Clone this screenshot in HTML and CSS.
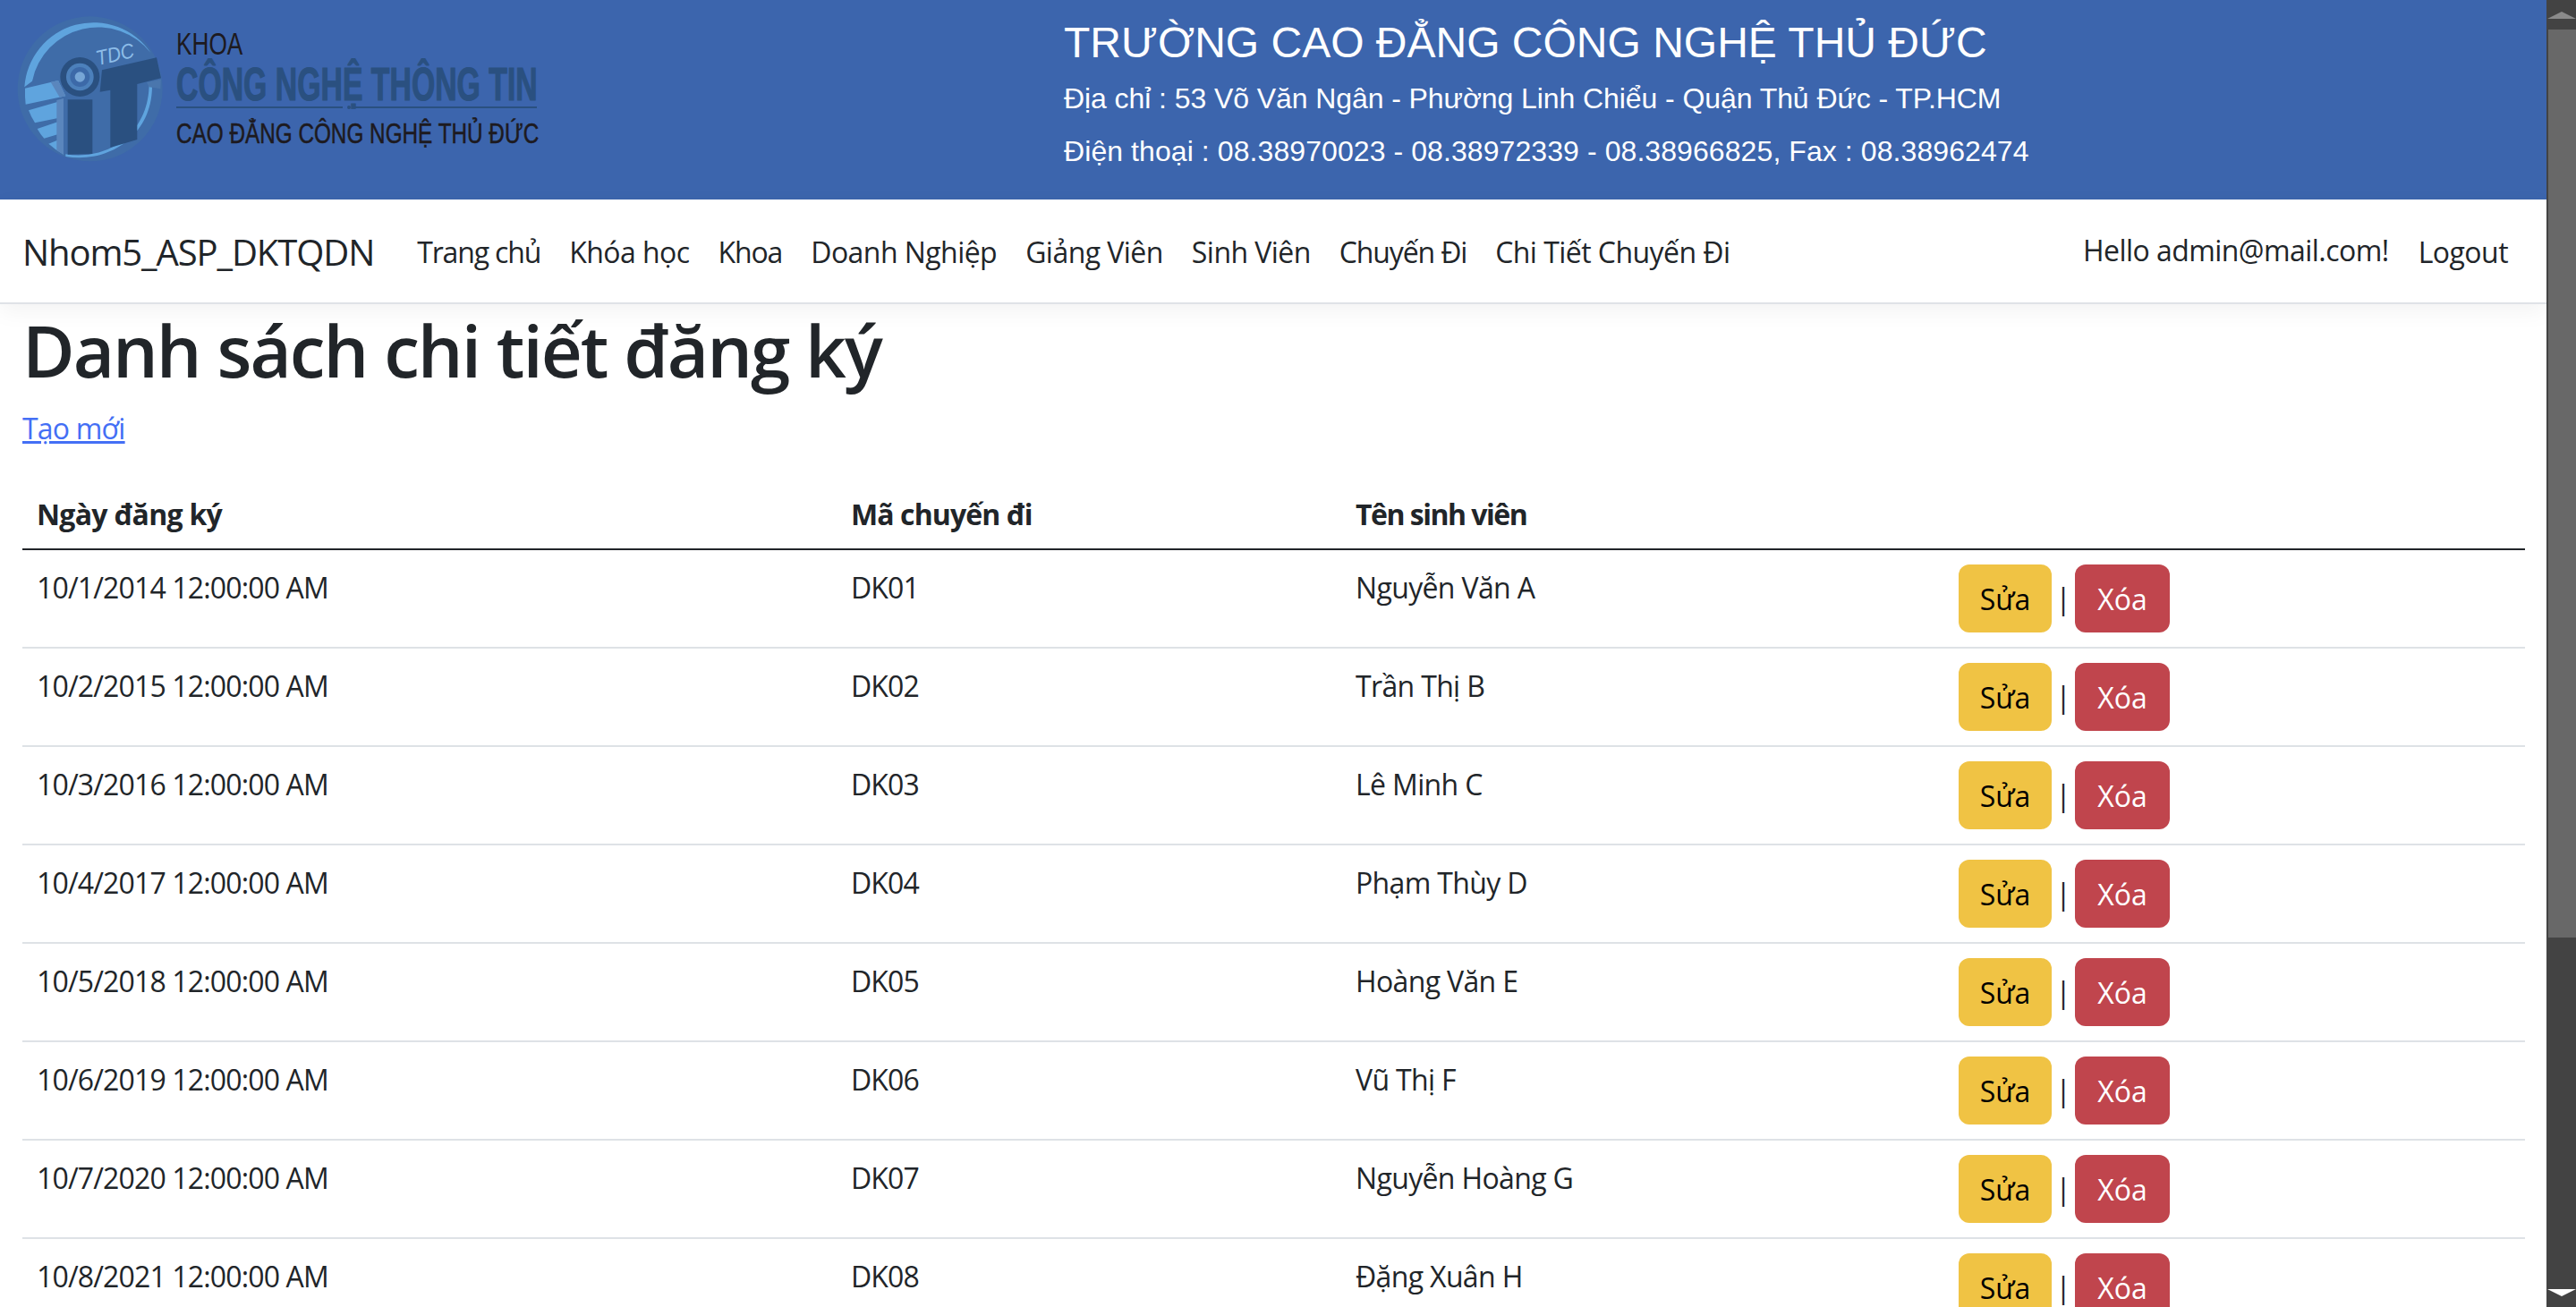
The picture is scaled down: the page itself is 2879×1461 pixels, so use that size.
FILE: index.html
```html
<!DOCTYPE html>
<html lang="vi">
<head>
<meta charset="utf-8">
<title>Danh sách chi tiết đăng ký</title>
<link rel="stylesheet" href="styles.css">
</head>
<body>
<div class="app">
  <div class="page">
    <header class="banner">
      <svg class="logo" viewBox="0 0 640 223" width="640" height="223" role="img" aria-label="Khoa Công nghệ thông tin">
        <g transform="translate(10 10) scale(.3333)">
          <circle cx="272" cy="268" r="243" fill="#3f6ca8"/>
          <path d="M52 262 A232 232 0 0 1 476 148 A225 225 0 0 0 78 242 Z" fill="#5fa4de"/>
          <path d="M190 487 C330 510 470 420 470 250 L480 250 C485 420 340 520 190 495 Z" fill="#5fa4de"/>
          <path d="M54 266 L165 240 L190 292 L56 320 Q53 295 54 266 Z" fill="#5fa4de"/>
          <path d="M66 340 L183 306 L183 362 L87 382 Q74 362 66 340 Z" fill="#5fa4de"/>
          <path d="M95 402 L183 372 L183 415 L118 434 Q105 420 95 402 Z" fill="#5fa4de"/>
          <path d="M133 452 L183 432 L183 488 Q155 472 133 452 Z" fill="#5fa4de"/>
          <path d="M160 306 L183 300 L183 488 L160 474 Z" fill="#5a86bd"/>
          <path d="M140 245 L165 240 L190 292 L170 296 Z" fill="#5a86bd"/>
          <path d="M197 304 H280 V486 L197 488 Z" fill="#2a5080"/>
          <circle cx="238" cy="228" r="66" fill="#2a5080"/>
          <circle cx="238" cy="228" r="46" fill="#4c80bb"/>
          <circle cx="238" cy="228" r="33" fill="#3c69a8"/>
          <circle cx="238" cy="228" r="17" fill="#76a5d6"/>
          <path d="M312 205 L495 163 L510 232 L430 252 L430 438 L340 465 L340 272 L305 278 Z" fill="#2a5080"/>
          <path d="M462 246 L510 236 L508 268 L470 262 Z" fill="#4a76ad"/>
          <text class="logo-tdc" transform="translate(298 190) rotate(-13) scale(.9 1)">TDC</text>
        </g>
        <text class="logo-khoa" transform="translate(197 61) scale(.75 1)">KHOA</text>
        <text class="logo-cntt" transform="translate(197 112) scale(.663 1)">CÔNG NGHỆ THÔNG TIN</text>
        <path class="logo-rule" d="M197 120 H383 M396 120 H600"/>
        <circle class="logo-dot" cx="390" cy="120" r="2"/>
        <text class="logo-cao" transform="translate(197 160) scale(.76 1)">CAO ĐẲNG CÔNG NGHỆ THỦ ĐỨC</text>
      </svg>
      <div class="school">
        <div class="school-name">TRƯỜNG CAO ĐẲNG CÔNG NGHỆ THỦ ĐỨC</div>
        <div class="school-addr">Địa chỉ : 53 Võ Văn Ngân - Phường Linh Chiểu - Quận Thủ Đức - TP.HCM</div>
        <div class="school-phone">Điện thoại : 08.38970023 - 08.38972339 - 08.38966825, Fax : 08.38962474</div>
      </div>
    </header>
    <nav class="navbar">
      <a class="brand" href="#">Nhom5_ASP_DKTQDN</a>
      <ul class="nav-links">
        <li class="tight"><a href="#">Trang chủ</a></li>
        <li><a href="#">Khóa học</a></li>
        <li class="tight"><a href="#">Khoa</a></li>
        <li><a href="#">Doanh Nghiệp</a></li>
        <li><a href="#">Giảng Viên</a></li>
        <li><a href="#">Sinh Viên</a></li>
        <li class="tight"><a href="#">Chuyến Đi</a></li>
        <li><a href="#">Chi Tiết Chuyến Đi</a></li>
      </ul>
      <div class="user">
        <span class="hello">Hello admin@mail.com!</span>
        <a class="logout" href="#">Logout</a>
      </div>
    </nav>
    <main class="content">
      <h1>Danh sách chi tiết đăng ký</h1>
      <p class="create"><a href="#">Tạo mới</a></p>
      <table>
        <thead>
          <tr><th class="c1">Ngày đăng ký</th><th class="c2">Mã chuyến đi</th><th class="c3">Tên sinh viên</th><th></th></tr>
        </thead>
        <tbody>
          <tr><td>10/1/2014 12:00:00 AM</td><td>DK01</td><td>Nguyễn Văn A</td><td><div class="actions"><a class="btn edit" href="#">Sửa</a><span class="sep">|</span><a class="btn del" href="#">Xóa</a></div></td></tr>
          <tr><td>10/2/2015 12:00:00 AM</td><td>DK02</td><td>Trần Thị B</td><td><div class="actions"><a class="btn edit" href="#">Sửa</a><span class="sep">|</span><a class="btn del" href="#">Xóa</a></div></td></tr>
          <tr><td>10/3/2016 12:00:00 AM</td><td>DK03</td><td>Lê Minh C</td><td><div class="actions"><a class="btn edit" href="#">Sửa</a><span class="sep">|</span><a class="btn del" href="#">Xóa</a></div></td></tr>
          <tr><td>10/4/2017 12:00:00 AM</td><td>DK04</td><td>Phạm Thùy D</td><td><div class="actions"><a class="btn edit" href="#">Sửa</a><span class="sep">|</span><a class="btn del" href="#">Xóa</a></div></td></tr>
          <tr><td>10/5/2018 12:00:00 AM</td><td>DK05</td><td>Hoàng Văn E</td><td><div class="actions"><a class="btn edit" href="#">Sửa</a><span class="sep">|</span><a class="btn del" href="#">Xóa</a></div></td></tr>
          <tr><td>10/6/2019 12:00:00 AM</td><td>DK06</td><td>Vũ Thị F</td><td><div class="actions"><a class="btn edit" href="#">Sửa</a><span class="sep">|</span><a class="btn del" href="#">Xóa</a></div></td></tr>
          <tr><td>10/7/2020 12:00:00 AM</td><td>DK07</td><td>Nguyễn Hoàng G</td><td><div class="actions"><a class="btn edit" href="#">Sửa</a><span class="sep">|</span><a class="btn del" href="#">Xóa</a></div></td></tr>
          <tr><td>10/8/2021 12:00:00 AM</td><td>DK08</td><td>Đặng Xuân H</td><td><div class="actions"><a class="btn edit" href="#">Sửa</a><span class="sep">|</span><a class="btn del" href="#">Xóa</a></div></td></tr>
        </tbody>
      </table>
    </main>
  </div>
  <div class="scrollbar" aria-hidden="true">
    <div class="arrow"><span class="tri-up"></span></div>
    <div class="thumb"></div>
    <div class="track"></div>
    <div class="arrow"><span class="tri-down"></span></div>
  </div>
</div>
</body>
</html>
```
FILE: styles.css
```css
* { box-sizing: border-box; }
html, body { margin: 0; height: 100%; overflow: hidden; }
body { font-family: "Open Sans", "Noto Sans", sans-serif; font-size: 32px; line-height: 48px; color: #212529; background: #fff; }
a { color: inherit; text-decoration: none; }

.app { display: flex; height: 100vh; }
.page { flex: 1; min-width: 0; overflow: hidden; }

.banner { display: grid; grid-template-columns: 1189px 1fr; height: 223px; background: #3c65ad; color: #fff; font-family: "Liberation Sans", Arial, sans-serif; }
.logo { display: block; }
.logo-tdc { font: italic 400 70px "Liberation Sans", Arial, sans-serif; fill: #8dbde8; }
.logo-khoa { font: 400 35px "Liberation Sans", Arial, sans-serif; fill: #1d1a20; }
.logo-cntt { font: 700 51px "Liberation Sans", Arial, sans-serif; fill: #2a5080; stroke: #2a5080; stroke-width: 1.2px; }
.logo-cao { font: 400 32px "Liberation Sans", Arial, sans-serif; fill: #1d1a20; stroke: #1d1a20; stroke-width: .5px; }
.logo-rule { stroke: #2a5080; stroke-width: 2; fill: none; }
.logo-dot { fill: #2a5080; }

.school { padding-top: 16px; }
.school-name { font-size: 48px; line-height: 64px; }
.school-addr { font-size: 32px; line-height: 60px; letter-spacing: -.08px; }
.school-phone { font-size: 32px; line-height: 59px; letter-spacing: .08px; }

.navbar { display: flex; align-items: center; height: 117px; padding: 2px 24px 0 25px; background: #fff; border-bottom: 2px solid #dfe2e7; box-shadow: 0 8px 24px rgba(0,0,0,.05); letter-spacing: -.55px; }
.brand { font-size: 40px; line-height: 60px; margin-right: 32px; letter-spacing: -1.1px; }
.nav-links { display: flex; gap: 32px; list-style: none; margin: 0; padding: 0 0 0 16px; }
.nav-links .tight { letter-spacing: -1.15px; }
.user { margin-left: auto; display: flex; gap: 33px; align-items: center; padding-right: 19px; }
.hello { position: relative; top: -2px; }

.content { padding: 0 24px 0 25px; }
h1 { margin: 0 0 16px; padding-top: 3px; height: 96px; font-size: 80px; line-height: 96px; font-weight: 600; letter-spacing: -2px; }
.create { margin: 0 0 33px; padding-top: 3px; height: 48px; letter-spacing: -.8px; }
.create a { color: #446ff5; text-decoration: underline; }

table { width: 2797px; border-collapse: collapse; table-layout: fixed; }
th, td { padding: 18px 16px 14px; text-align: left; vertical-align: top; }
th { font-weight: 700; border-bottom: 2px solid #212529; letter-spacing: -.9px; }
th.c1 { letter-spacing: -.7px; }
th.c3 { letter-spacing: -1.5px; }
td { border-bottom: 2px solid #dee2e6; letter-spacing: -.65px; }
td:first-child { letter-spacing: -.85px; }
td:nth-child(2) { letter-spacing: -.9px; }
td:last-child { padding: 16px; letter-spacing: 0; }
.c1 { width: 910px; }
.c2 { width: 564px; }
.c3 { width: 674px; }

.actions { display: flex; align-items: center; }
.btn { display: block; height: 76px; padding: 15px 0 13px; text-align: center; border-radius: 12px; }
.edit { width: 104px; background: #f0c344; color: #000; }
.del { width: 106px; background: #c0454d; color: #fff; }
.sep { width: 26px; text-align: center; }

.scrollbar { flex: 0 0 33px; display: flex; flex-direction: column; background: #434343; }
.arrow { height: 33px; display: flex; align-items: center; justify-content: center; }
.thumb { height: 1015px; margin-left: 2px; background: #686868; }
.track { flex: 1; }
.tri-up { border: 8px solid transparent; border-top: 0; border-left-width: 16px; border-right-width: 16px; border-bottom: 8px solid #8a8a8a; }
.tri-down { border: 8px solid transparent; border-bottom: 0; border-left-width: 16px; border-right-width: 16px; border-top: 8px solid #fff; }
```
